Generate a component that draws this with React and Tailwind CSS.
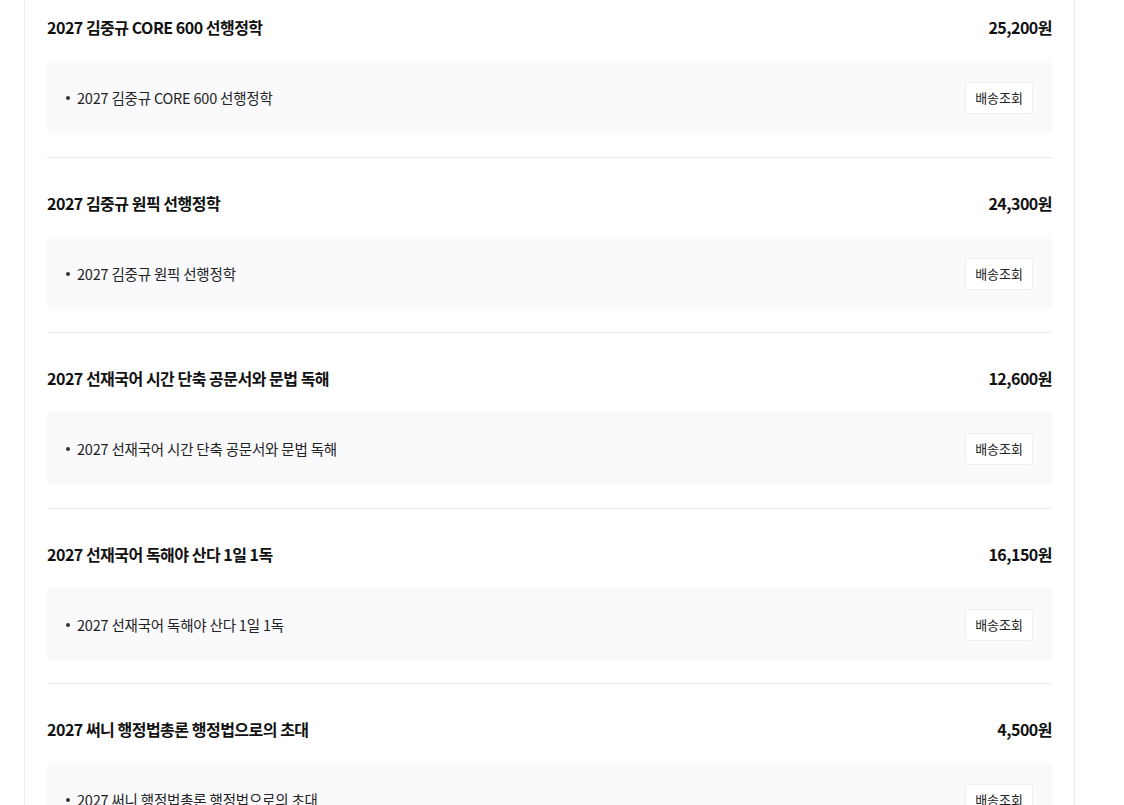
import React from 'react';

const orders = [
  { title: '2027 김중규 CORE 600 선행정학', price: '25,200원' },
  { title: '2027 김중규 원픽 선행정학', price: '24,300원' },
  { title: '2027 선재국어 시간 단축 공문서와 문법 독해', price: '12,600원' },
  { title: '2027 선재국어 독해야 산다 1일 1독', price: '16,150원' },
  { title: '2027 써니 행정법총론 행정법으로의 초대', price: '4,500원' },
];

function OrderItem({ title, price }) {
  return (
    <div className="pt-[33px] pb-[23.5px] border-b border-[#ececec]">
      <div className="flex items-center justify-between h-6">
        <h3 className="text-[16px] font-bold text-[#111] tracking-[-0.5px]">{title}</h3>
        <span className="text-[16px] font-bold text-[#111] tracking-[-0.5px]">{price}</span>
      </div>
      <div className="mt-[22px] h-[72px] bg-[#fafafc] rounded flex items-center justify-between pl-[19px] pr-[19px]">
        <div className="flex items-center text-[14.5px] text-[#222] tracking-[-0.2px] pt-[2px]">
          <span className="w-[4px] h-[4px] rounded-full bg-[#333] mr-[7px]" />
          {title}
        </div>
        <button className="mt-[2px] h-[32px] px-[9px] bg-white border border-[#eeeeee] rounded-[3px] text-[13px] text-[#222]">
          배송조회
        </button>
      </div>
    </div>
  );
}

export default function App() {
  return (
    <div
      className="min-h-[805px] bg-white overflow-hidden"
      style={{ fontFamily: '"Noto Sans CJK KR", "Noto Sans", sans-serif' }}
    >
      <div className="ml-[24px] w-[1051px] min-h-[805px] border-x border-[#ececec] px-[22px]">
        <div className="-mt-[18px]">
          {orders.map((o) => (
            <OrderItem key={o.title} {...o} />
          ))}
        </div>
      </div>
    </div>
  );
}
